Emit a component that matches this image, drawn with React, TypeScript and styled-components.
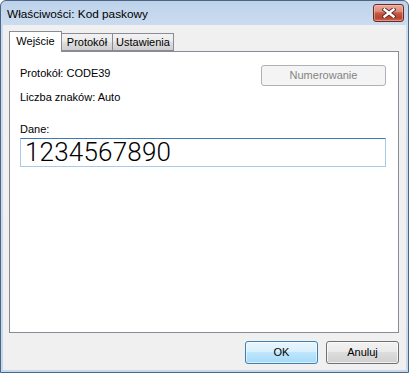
import React from "react";
import styled, { createGlobalStyle } from "styled-components";

const GlobalStyle = createGlobalStyle`
  html, body {
    margin: 0;
    padding: 0;
    background: #ffffff;
  }
  body {
    font-family: "Liberation Sans", Arial, sans-serif;
    font-size: 11px;
    color: #000000;
  }
`;

const Window = styled.div`
  box-sizing: border-box;
  width: 409px;
  height: 373px;
  display: flex;
  flex-direction: column;
  border: 1px solid #4b6584;
  border-radius: 6px 6px 0 0;
  background: linear-gradient(#bdd2ea 0px, #cbdcf0 24px, #c4d8ee 100%);
  padding: 0 2px 2px 2px;
`;

const TitleBar = styled.div`
  height: 24px;
  flex: none;
  display: flex;
  align-items: flex-start;
  justify-content: space-between;
  padding-left: 4px;
`;

const Title = styled.div`
  margin-top: 6px;
  font-size: 11.8px;
  line-height: 15px;
  color: #000000;
`;

const CloseButton = styled.div`
  box-sizing: border-box;
  width: 31px;
  height: 18px;
  margin-top: 3px;
  margin-right: 2px;
  border: 1px solid #6b2b22;
  border-radius: 3px;
  background: linear-gradient(
    #e9aa9c 0%,
    #da8d7c 40%,
    #c75a45 50%,
    #b9442f 80%,
    #c96a52 100%
  );
  box-shadow: inset 0 0 0 1px rgba(255, 210, 200, 0.45);
  display: flex;
  align-items: center;
  justify-content: center;
`;

const Client = styled.div`
  flex: 1;
  display: flex;
  flex-direction: column;
  background: #f0f0f0;
`;

const TabStrip = styled.div`
  height: 20px;
  margin-top: 6px;
  padding-left: 6px;
  display: flex;
  align-items: flex-start;
  position: relative;
  z-index: 1;
`;

const Tab = styled.div<{ $active?: boolean; $w: number }>`
  box-sizing: border-box;
  width: ${(p) => p.$w}px;
  height: ${(p) => (p.$active ? 21 : 18)}px;
  margin-top: ${(p) => (p.$active ? 0 : 2)}px;
  margin-left: ${(p) => (p.$active ? 0 : -1)}px;
  border: 1px solid #898c95;
  border-bottom: ${(p) => (p.$active ? "none" : "1px solid #898c95")};
  background: ${(p) =>
    p.$active
      ? "#ffffff"
      : "linear-gradient(#f3f3f3 0%, #ebebeb 45%, #dddddd 55%, #cfcfcf 100%)"};
  padding-top: ${(p) => (p.$active ? 2 : 1)}px;
  line-height: 15px;
  text-align: center;
  white-space: nowrap;
  &:first-child {
    margin-left: 0;
  }
`;

const Panel = styled.div`
  box-sizing: border-box;
  height: 282px;
  margin: 0 7px 0 6px;
  border: 1px solid #898c95;
  background: #ffffff;
  padding: 13px 12px 0 10px;
  display: flex;
  flex-direction: column;
`;

const TopRow = styled.div`
  display: flex;
  align-items: flex-start;
  justify-content: space-between;
`;

const Label = styled.div<{ $gap?: number }>`
  line-height: 16px;
  margin-top: ${(p) => p.$gap ?? 0}px;
  white-space: nowrap;
`;

const DisabledButton = styled.button`
  box-sizing: border-box;
  width: 125px;
  height: 21px;
  margin: 0;
  padding: 0;
  border: 1px solid #adb2b5;
  border-radius: 3px;
  background: #f4f4f4;
  color: #838383;
  font-family: "Liberation Sans", Arial, sans-serif;
  font-size: 11px;
  line-height: 15px;
`;

const DataInput = styled.input`
  box-sizing: border-box;
  width: 366px;
  height: 29px;
  margin: 1px 0 0 0;
  padding: 0 0 2px 4px;
  border: 1px solid #a9cbe8;
  border-top-color: #3d7cb3;
  border-radius: 0;
  outline: none;
  background: #ffffff;
  color: #000000;
  font-family: Roboto, "DejaVu Sans Mono", monospace;
  font-weight: 300;
  font-size: 26px;
  letter-spacing: 0.2px;
`;

const ButtonRow = styled.div`
  display: flex;
  justify-content: flex-end;
  gap: 8px;
  margin: 8px 7px 0 0;
`;

const DialogButton = styled.button<{ $default?: boolean }>`
  box-sizing: border-box;
  width: 73px;
  height: 23px;
  margin: 0;
  padding: 0;
  border: 1px solid ${(p) => (p.$default ? "#3c7fb1" : "#707070")};
  border-radius: 3px;
  background: ${(p) =>
    p.$default
      ? "linear-gradient(#eaf6fd 0%, #d9f0fc 45%, #bee6fd 50%, #a7d9f5 100%)"
      : "linear-gradient(#f2f2f2 0%, #ebebeb 45%, #dddddd 50%, #cfcfcf 100%)"};
  box-shadow: inset 0 0 0 1px
    ${(p) => (p.$default ? "rgba(255,255,255,0.55)" : "rgba(255,255,255,0.7)")};
  color: #000000;
  font-family: "Liberation Sans", Arial, sans-serif;
  font-size: 11px;
  line-height: 15px;
`;

const CloseGlyph = () => (
  <svg width="14" height="10" viewBox="0 0 14 10">
    <path
      d="M2.5 1.5 L11.5 8.5 M11.5 1.5 L2.5 8.5"
      stroke="#5a2a24"
      strokeWidth="4.2"
      strokeLinecap="square"
      fill="none"
    />
    <path
      d="M2.5 1.5 L11.5 8.5 M11.5 1.5 L2.5 8.5"
      stroke="#ffffff"
      strokeWidth="2.4"
      strokeLinecap="square"
      fill="none"
    />
  </svg>
);

export default function App() {
  return (
    <>
      <GlobalStyle />
      <Window>
        <TitleBar>
          <Title>Właściwości: Kod paskowy</Title>
          <CloseButton>
            <CloseGlyph />
          </CloseButton>
        </TitleBar>
        <Client>
          <TabStrip>
            <Tab $active $w={53}>
              Wejście
            </Tab>
            <Tab $w={52}>Protokół</Tab>
            <Tab $w={62}>Ustawienia</Tab>
          </TabStrip>
          <Panel>
            <TopRow>
              <Label>Protokół: CODE39</Label>
              <DisabledButton disabled>Numerowanie</DisabledButton>
            </TopRow>
            <Label $gap={3}>Liczba znaków: Auto</Label>
            <Label $gap={16}>Dane:</Label>
            <DataInput defaultValue="1234567890" />
          </Panel>
          <ButtonRow>
            <DialogButton $default>OK</DialogButton>
            <DialogButton>Anuluj</DialogButton>
          </ButtonRow>
        </Client>
      </Window>
    </>
  );
}
